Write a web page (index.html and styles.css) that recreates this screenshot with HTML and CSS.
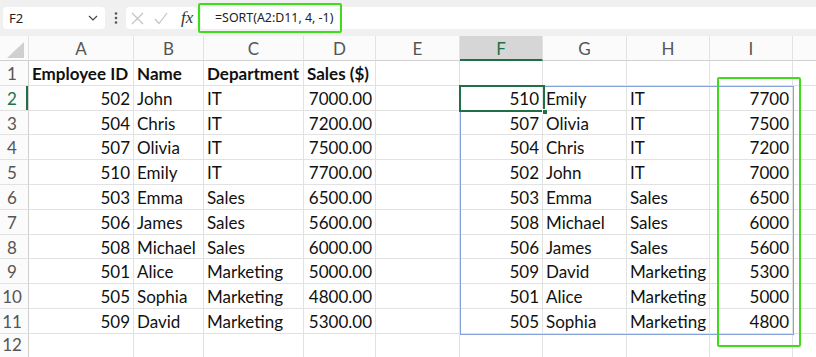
FILE: index.html
```html
<!DOCTYPE html>
<html lang="en">
<head>
  <meta charset="UTF-8" />
  <title>SORT example</title>
  <link rel="stylesheet" href="styles.css">
</head>
<body>
  <div class="toolbar">
    <div class="name-box">
      <span>F2</span>
      <svg width="10" height="6" viewBox="0 0 10 6"><path d="M1 1 L5 5 L9 1" fill="none" stroke="#444" stroke-width="1.2"/></svg>
    </div>
    <div class="grip">
      <svg width="4" height="12" viewBox="0 0 4 12"><circle cx="2" cy="1.5" r="1.3" fill="#555"/><circle cx="2" cy="6" r="1.3" fill="#555"/><circle cx="2" cy="10.5" r="1.3" fill="#555"/></svg>
    </div>
    <div class="fx-tools">
      <svg width="13" height="13" viewBox="0 0 13 13"><path d="M1 1 L12 12 M12 1 L1 12" stroke="#c4c4c4" stroke-width="1.2"/></svg>
      <svg width="14" height="13" viewBox="0 0 14 13"><path d="M1 7 L5 11.5 L13 1" fill="none" stroke="#c4c4c4" stroke-width="1.2"/></svg>
      <span class="fx">fx</span>
    </div>
    <div class="formula">
      <span>=SORT(A2:D11, 4, -1)</span>
      <div class="mark formula-mark"></div>
    </div>
  </div>

  <div class="sheet">
    <div class="row head">
      <div class="cell corner"><svg width="18" height="16" viewBox="0 0 18 16"><path d="M17 0 L17 16 L0 16 Z" fill="#d0d0d0"/></svg></div>
      <div class="cell">A</div><div class="cell">B</div><div class="cell">C</div><div class="cell">D</div>
      <div class="cell">E</div><div class="cell sel">F</div><div class="cell">G</div><div class="cell">H</div>
      <div class="cell">I</div><div class="cell"></div>
    </div>
    <div class="row">
      <div class="cell rh">1</div>
      <div class="cell b">Employee ID</div><div class="cell b">Name</div><div class="cell b">Department</div><div class="cell b">Sales ($)</div>
      <div class="cell"></div><div class="cell"></div><div class="cell"></div><div class="cell"></div><div class="cell"></div><div class="cell"></div>
    </div>
    <div class="row">
      <div class="cell rh on">2</div>
      <div class="cell n">502</div><div class="cell">John</div><div class="cell">IT</div><div class="cell n">7000.00</div>
      <div class="cell"></div>
      <div class="cell n">510</div><div class="cell">Emily</div><div class="cell">IT</div><div class="cell n">7700</div><div class="cell"></div>
    </div>
    <div class="row">
      <div class="cell rh">3</div>
      <div class="cell n">504</div><div class="cell">Chris</div><div class="cell">IT</div><div class="cell n">7200.00</div>
      <div class="cell"></div>
      <div class="cell n">507</div><div class="cell">Olivia</div><div class="cell">IT</div><div class="cell n">7500</div><div class="cell"></div>
    </div>
    <div class="row">
      <div class="cell rh">4</div>
      <div class="cell n">507</div><div class="cell">Olivia</div><div class="cell">IT</div><div class="cell n">7500.00</div>
      <div class="cell"></div>
      <div class="cell n">504</div><div class="cell">Chris</div><div class="cell">IT</div><div class="cell n">7200</div><div class="cell"></div>
    </div>
    <div class="row">
      <div class="cell rh">5</div>
      <div class="cell n">510</div><div class="cell">Emily</div><div class="cell">IT</div><div class="cell n">7700.00</div>
      <div class="cell"></div>
      <div class="cell n">502</div><div class="cell">John</div><div class="cell">IT</div><div class="cell n">7000</div><div class="cell"></div>
    </div>
    <div class="row">
      <div class="cell rh">6</div>
      <div class="cell n">503</div><div class="cell">Emma</div><div class="cell">Sales</div><div class="cell n">6500.00</div>
      <div class="cell"></div>
      <div class="cell n">503</div><div class="cell">Emma</div><div class="cell">Sales</div><div class="cell n">6500</div><div class="cell"></div>
    </div>
    <div class="row">
      <div class="cell rh">7</div>
      <div class="cell n">506</div><div class="cell">James</div><div class="cell">Sales</div><div class="cell n">5600.00</div>
      <div class="cell"></div>
      <div class="cell n">508</div><div class="cell">Michael</div><div class="cell">Sales</div><div class="cell n">6000</div><div class="cell"></div>
    </div>
    <div class="row">
      <div class="cell rh">8</div>
      <div class="cell n">508</div><div class="cell">Michael</div><div class="cell">Sales</div><div class="cell n">6000.00</div>
      <div class="cell"></div>
      <div class="cell n">506</div><div class="cell">James</div><div class="cell">Sales</div><div class="cell n">5600</div><div class="cell"></div>
    </div>
    <div class="row">
      <div class="cell rh">9</div>
      <div class="cell n">501</div><div class="cell">Alice</div><div class="cell">Marketing</div><div class="cell n">5000.00</div>
      <div class="cell"></div>
      <div class="cell n">509</div><div class="cell">David</div><div class="cell">Marketing</div><div class="cell n">5300</div><div class="cell"></div>
    </div>
    <div class="row">
      <div class="cell rh">10</div>
      <div class="cell n">505</div><div class="cell">Sophia</div><div class="cell">Marketing</div><div class="cell n">4800.00</div>
      <div class="cell"></div>
      <div class="cell n">501</div><div class="cell">Alice</div><div class="cell">Marketing</div><div class="cell n">5000</div><div class="cell"></div>
    </div>
    <div class="row">
      <div class="cell rh">11</div>
      <div class="cell n">509</div><div class="cell">David</div><div class="cell">Marketing</div><div class="cell n">5300.00</div>
      <div class="cell"></div>
      <div class="cell n">505</div><div class="cell">Sophia</div><div class="cell">Marketing</div><div class="cell n">4800</div><div class="cell"></div>
    </div>
    <div class="row last">
      <div class="cell rh">12</div>
      <div class="cell"></div><div class="cell"></div><div class="cell"></div><div class="cell"></div><div class="cell"></div>
      <div class="cell"></div><div class="cell"></div><div class="cell"></div><div class="cell"></div><div class="cell"></div>
    </div>

    <!-- overlays: spill range, active cell, highlight box -->
    <div class="spill"></div>
    <div class="active"><div class="handle"></div></div>
    <div class="mark col-mark"></div>
  </div>
</body>
</html>
```

FILE: styles.css
```css
html, body {
  margin: 0;
  padding: 0;
  width: 816px;
  height: 357px;
  overflow: hidden;
  background: #fff;
  font-family: Lato, "Noto Sans", sans-serif;
  color: #111;
}

/* formula bar */
.toolbar {
  display: flex;
  align-items: center;
  height: 36px;
  background: #f0f0f0;
}

.name-box {
  margin-left: 3px;
  width: 102px;
  height: 22px;
  box-sizing: border-box;
  background: #fff;
  border-radius: 4px;
  display: flex;
  align-items: center;
  justify-content: space-between;
  padding: 0 7px 0 6px;
  font-family: "Noto Sans", sans-serif;
  font-size: 13px;
  color: #222;
}

.grip {
  width: 21px;
  display: flex;
  justify-content: center;
}

.fx-tools {
  width: 71px;
  height: 22px;
  box-sizing: border-box;
  background: #fff;
  border-radius: 4px;
  display: flex;
  align-items: center;
  gap: 10px;
  padding-left: 5px;
}

.fx {
  font-family: "Liberation Serif", serif;
  font-style: italic;
  font-size: 17px;
  color: #333;
  margin-left: 3px;
}

.formula {
  position: relative;
  flex: 1;
  margin-left: 4px;
  height: 22px;
  line-height: 22px;
  padding-left: 14px;
  background: #fff;
  border-radius: 4px 0 0 4px;
  font-family: "Noto Sans", sans-serif;
  font-size: 12.4px;
  color: #222;
}

.mark {
  position: absolute;
  box-sizing: border-box;
  border: 2px solid #3fdc1e;
  border-radius: 2px;
}

.formula-mark {
  left: -3px;
  top: -4px;
  width: 144px;
  height: 30px;
}

/* grid */
.sheet {
  position: relative;
}

.row {
  display: grid;
  grid-template-columns: 29px 105px 70px 100px 72px 84px 83px 84px 83px 83px 40px;
  height: 24.8px;
}

.row.head {
  height: 25px;
}

.cell {
  box-sizing: border-box;
  border-right: 1px solid #e2e2e2;
  border-bottom: 1px solid #e2e2e2;
  padding: 2px 3px 0;
  line-height: 22px;
  font-size: 17px;
  white-space: nowrap;
  overflow: hidden;
}

.n {
  text-align: right;
}

.b {
  font-weight: bold;
}

.head .cell {
  background: #fbfbfb;
  border-bottom-color: #cfcfcf;
  text-align: center;
  color: #555;
  padding: 0;
  line-height: 25px;
}

.head .corner {
  display: flex;
  align-items: flex-end;
  justify-content: flex-end;
  padding: 0 3px 2px 0;
}

.head .sel {
  background: #d6d6d6;
  color: #1f7145;
  border-bottom: 2px solid #1f7145;
}

.rh {
  background: #fbfbfb;
  border-right-color: #cfcfcf;
  text-align: center;
  color: #555;
  padding: 2px 4px 0 0;
}

.last .rh {
  padding-top: 1px;
  line-height: 20px;
}

.rh.on {
  color: #1f7145;
  box-shadow: inset -2px 0 #1f7145;
}

.spill {
  position: absolute;
  left: 460px;
  top: 50px;
  width: 334px;
  height: 249px;
  box-sizing: border-box;
  border: 1px solid #86a3d9;
}

.active {
  position: absolute;
  left: 459px;
  top: 49px;
  width: 86px;
  height: 27px;
  box-sizing: border-box;
  border: 2px solid #1f7145;
}

.handle {
  position: absolute;
  right: -5px;
  bottom: -5px;
  width: 6px;
  height: 6px;
  box-sizing: border-box;
  background: #1f7145;
  border: 1px solid #fff;
}

.col-mark {
  left: 717px;
  top: 41px;
  width: 84px;
  height: 270px;
}
```
